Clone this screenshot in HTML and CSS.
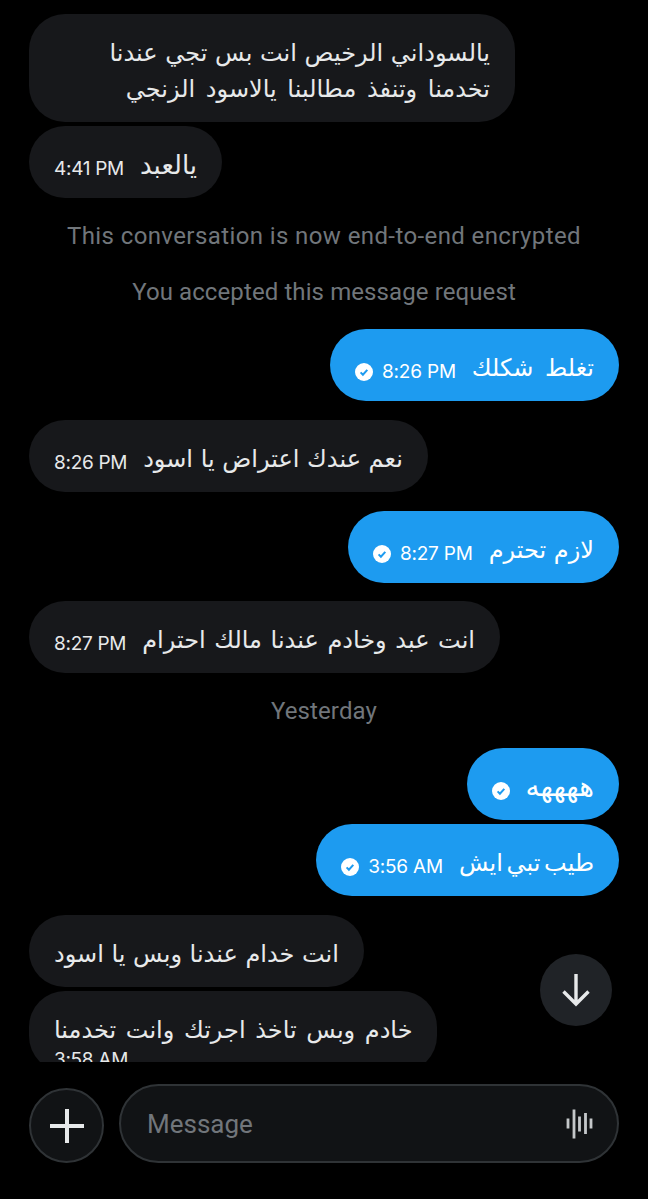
FILE: index.html
```html
<!DOCTYPE html>
<html>
<head>
	<title>Messages</title>
	<link rel="stylesheet" href="styles.css">
</head>
<body>
	<div class="screen">
		<div class="thread">
			<div class="bubble them wrap-1 near">
				<div class="text" dir="rtl">
					<div>يالسوداني الرخيص انت بس تجي عندنا</div>
					<div class="space-3">تخدمنا وتنفذ مطالبنا يالاسود الزنجي</div>
				</div>
			</div>
			<div class="bubble them">
				<span class="time">4:41 PM</span>
				<span class="text large" dir="rtl">يالعبد</span>
			</div>
			<div class="notice first wide">This conversation is now end-to-end encrypted</div>
			<div class="notice second">You accepted this message request</div>
			<div class="bubble me">
				<svg class="tick" viewBox="0 0 18 18"><circle cx="9" cy="9" r="9" fill="#fff"/><path d="M5.6 9.4l2.3 2.3 4.4-4.8" fill="none" stroke="#1d9bf0" stroke-width="2"/></svg>
				<span class="time">8:26 PM</span>
				<span class="text space-4" dir="rtl">تغلط شكلك</span>
			</div>
			<div class="bubble them">
				<span class="time">8:26 PM</span>
				<span class="text" dir="rtl">نعم عندك اعتراض يا اسود</span>
			</div>
			<div class="bubble me">
				<svg class="tick" viewBox="0 0 18 18"><circle cx="9" cy="9" r="9" fill="#fff"/><path d="M5.6 9.4l2.3 2.3 4.4-4.8" fill="none" stroke="#1d9bf0" stroke-width="2"/></svg>
				<span class="time">8:27 PM</span>
				<span class="text" dir="rtl">لازم تحترم</span>
			</div>
			<div class="bubble them tight">
				<span class="time">8:27 PM</span>
				<span class="text space-1" dir="rtl">انت عبد وخادم عندنا مالك احترام</span>
			</div>
			<div class="notice first">Yesterday</div>
			<div class="bubble me">
				<svg class="tick" viewBox="0 0 18 18"><circle cx="9" cy="9" r="9" fill="#fff"/><path d="M5.6 9.4l2.3 2.3 4.4-4.8" fill="none" stroke="#1d9bf0" stroke-width="2"/></svg>
				<span class="text larger" dir="rtl">ههههه</span>
			</div>
			<div class="bubble me near-top">
				<svg class="tick" viewBox="0 0 18 18"><circle cx="9" cy="9" r="9" fill="#fff"/><path d="M5.6 9.4l2.3 2.3 4.4-4.8" fill="none" stroke="#1d9bf0" stroke-width="2"/></svg>
				<span class="time">3:56 AM</span>
				<span class="text narrow" dir="rtl">طيب تبي ايش</span>
			</div>
			<div class="bubble them">
				<span class="text" dir="rtl">انت خدام عندنا وبس يا اسود</span>
			</div>
			<div class="bubble them stack near-top">
				<span class="text space-2" dir="rtl">خادم وبس تاخذ اجرتك وانت تخدمنا</span>
				<span class="time">3:58 AM</span>
			</div>
		</div>

		<div class="scroll-down">
			<svg viewBox="0 0 30 34" width="30" height="34"><path d="M15 1v30M2.5 18.5L15 31l12.5-12.5" fill="none" stroke="#e7e9ea" stroke-width="3.4"/></svg>
		</div>

		<div class="composer">
			<div class="add">
				<svg viewBox="0 0 34 34" width="34" height="34"><path d="M17 0v34M0 17h34" fill="none" stroke="#e7e9ea" stroke-width="4"/></svg>
			</div>
			<div class="field">
				<span class="placeholder">Message</span>
				<svg viewBox="0 0 29 30" width="29" height="30"><path d="M3 9.5v10M9 0.5v29M14.5 7.5v15M20.5 4v21M26 9.5v10" fill="none" stroke="#c4c7c9" stroke-width="2.8"/></svg>
			</div>
		</div>
	</div>
</body>
</html>
```

FILE: styles.css
```css
body {
    margin: 0;
    background-color: #000;
    font-family: Roboto, "DejaVu Sans", sans-serif;
    color: #e7e9ea;
}

.screen {
    position: relative;
    width: 648px;
    height: 1199px;
    overflow: hidden;
}

.thread {
    display: flex;
    flex-direction: column;
    height: 1048px;
    padding: 14px 29px 0;
    overflow: hidden;
}

.bubble {
    display: flex;
    flex-shrink: 0;
    align-items: center;
    gap: 16px;
    box-sizing: border-box;
    min-height: 72px;
    padding: 21px 25px 15px;
    border-radius: 36px;
    margin-top: 19px;
}

.them {
    align-self: flex-start;
    background-color: #17181b;
}

.me {
    align-self: flex-end;
    background-color: #1d9bf0;
    color: #fff;
}

.near {
    margin-top: 0;
    margin-bottom: -15px;
}

.near-top {
    margin-top: 4px;
}

.tight {
    margin-top: 18px;
}

.wrap-1 {
    width: 486px;
}

.stack {
    flex-direction: column;
    align-items: flex-start;
    gap: 0;
    padding-bottom: 0;
}

.text {
    font-family: "DejaVu Sans", sans-serif;
    font-size: 24px;
    line-height: 36px;
}

.wrap-1 .text {
    width: 100%;
}

.large { font-size: 26px; }
.larger { font-size: 28px; }
.narrow { word-spacing: -4px; }
.space-1 { word-spacing: 1px; }
.space-2 { word-spacing: 2px; }
.space-3 { word-spacing: 3px; }
.space-4 { word-spacing: 4px; }

.time {
    font-family: Inter, sans-serif;
    font-size: 19px;
    line-height: 24px;
    letter-spacing: -0.3px;
    margin-top: 8px;
}

.me .time {
    letter-spacing: -0.2px;
}

.stack .time {
    margin-top: 0;
}

.tick {
    width: 18px;
    height: 18px;
    margin-top: 8px;
}

.tick + .time {
    margin-left: -7px;
}

.notice {
    font-size: 24px;
    line-height: 28px;
    letter-spacing: 0.1px;
    color: #71767b;
    text-align: center;
}

.notice.first {
    margin-top: 24px;
}

.notice.second {
    margin-top: 28px;
}

.notice.wide {
    letter-spacing: 0.4px;
}

.notice + .bubble {
    margin-top: 23px;
}

.scroll-down {
    position: absolute;
    left: 540px;
    top: 954px;
    display: flex;
    align-items: center;
    justify-content: center;
    width: 72px;
    height: 72px;
    border-radius: 50%;
    background-color: #202327;
}

.composer {
    display: flex;
    align-items: flex-end;
    gap: 15px;
    padding: 22px 29px 36px;
}

.add {
    display: flex;
    align-items: center;
    justify-content: center;
    box-sizing: border-box;
    width: 75px;
    height: 75px;
    flex-shrink: 0;
    background-color: #111315;
    border: 2px solid #2f3336;
    border-radius: 50%;
}

.field {
    display: flex;
    align-items: center;
    justify-content: space-between;
    flex: 1;
    box-sizing: border-box;
    height: 79px;
    padding: 0 23px 0 26px;
    background-color: #111315;
    border: 2px solid #2f3336;
    border-radius: 40px;
}

.placeholder {
    font-size: 26px;
    color: #71767b;
}
```
